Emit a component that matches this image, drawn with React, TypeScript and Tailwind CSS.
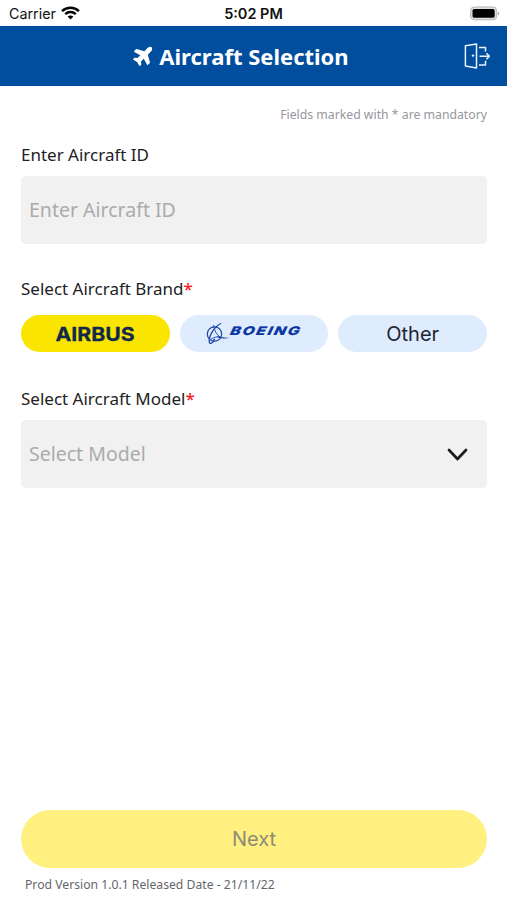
import React from "react";
import { FaPlane } from "react-icons/fa";

const noto = "font-['Noto_Sans',sans-serif]";
const inter = "font-['Inter',sans-serif]";

function StatusBar() {
  return (
    <div className={`grid h-[26px] grid-cols-3 items-center bg-white pl-[9px] pr-[7px] pt-[2px] text-[#111] ${inter}`}>
      <div className="flex items-center gap-[5px] text-[14.3px] leading-none">
        <span>Carrier</span>
        <svg className="-mt-[2px]" width="19" height="14" viewBox="0 0 19 14" fill="none" stroke="#050505" strokeWidth="2.5">
          <path d="M1.1 5.2C5.8.7 13.2.7 17.9 5.2" />
          <path d="M4.2 8.2c3-2.8 7.6-2.8 10.6 0" />
          <path d="M9.5 13.5 6.6 10.6c1.6-1.5 4.2-1.5 5.8 0z" fill="#050505" stroke="none" />
        </svg>
      </div>
      <span className="-ml-[2px] text-center text-[14.5px] font-semibold leading-none">5:02 PM</span>
      <svg className="-mt-[2px] justify-self-end" width="30" height="15" viewBox="0 0 30 15">
        <rect x=".6" y="1" width="26" height="12.8" rx="3.6" fill="#e0e0e0" stroke="#b5b5b5" />
        <rect x="2.5" y="3" width="22.2" height="8.8" rx="1.7" fill="#000" />
        <path d="M27.8 5.2c2 .8 2 3.6 0 4.4z" fill="#aaa" />
      </svg>
    </div>
  );
}

function Header() {
  return (
    <header className="grid h-[60px] grid-cols-[1fr_auto_1fr] items-center bg-[#004e9d] px-4 text-white">
      <span />
      <div className="-ml-[25px] flex items-center gap-[4px]">
        <FaPlane className="mb-[2px] -rotate-45" size={22} />
        <h1 className={`text-[22px] font-bold leading-none ${noto}`}>Aircraft Selection</h1>
      </div>
      <svg className="justify-self-end" width="27" height="26" viewBox="0 0 27 26" fill="none" stroke="#e6f4ff" strokeWidth="1.5" strokeLinejoin="round">
        <path d="M1.4 2.8 12.5.9v24L1.4 23z" />
        <path d="M15 4.4h6.5v4.2M15 21.9h6.5v-4.2M15.5 13.2h9.7M22.4 10.2l3 3-3 3" />
        <circle cx="9" cy="12.6" r="1.2" fill="#e6f4ff" stroke="none" />
      </svg>
    </header>
  );
}

function Label({ text, required = false }: { text: string; required?: boolean }) {
  return (
    <div className={`h-6 text-[17px] leading-6 text-[#222] ${noto}`}>
      {text}
      {required && <span className="font-medium text-[#fa1c24]">*</span>}
    </div>
  );
}

function AirbusLogo() {
  return (
    <svg className="overflow-visible" width="80" height="26" viewBox="0 0 80 26" role="img" aria-label="Airbus">
      <text x="0.5" y="19.5" textLength="79" lengthAdjust="spacingAndGlyphs" className="fill-[#12284c] font-['Inter',sans-serif] text-[19px] font-bold" stroke="#12284c" strokeWidth=".3">AIRBUS</text>
    </svg>
  );
}

function BoeingLogo() {
  return (
    <svg className="overflow-visible" width="96" height="24" viewBox="0 0 96 24" role="img" aria-label="Boeing">
      <g fill="none" stroke="#1d47a5">
        <circle cx="8.5" cy="12" r="7.2" strokeWidth="1.2" />
        <path d="M15 1.5C9 4 3.2 13 3.2 19c0 4.5 4 2.3 5.4-2.2" strokeWidth="1.3" />
        <path d="M7.5 3c.8 5.3 3 10 7.4 12.7" strokeWidth=".9" />
        <path d="M4.5 17.5c3.5-2.3 7-3.2 10-2.9" strokeWidth=".9" />
      </g>
      <path d="M11.5 14.7c4 .2 7.5 1.1 12.5 1.1-4.5 1.1-9 .6-12.5-.4z" fill="#1d47a5" />
      <text x="0" y="0" transform="translate(23.5 13.3) skewX(-14) scale(1.32 1)" textLength="52.5" lengthAdjust="spacing" className="fill-[#0b35a0] font-['Inter',sans-serif] text-[11.8px] font-extrabold italic" stroke="#0b35a0" strokeWidth=".2">BOEING</text>
    </svg>
  );
}

export default function App() {
  return (
    <div className="flex h-[900px] w-[507px] flex-col overflow-hidden bg-white">
      <StatusBar />
      <Header />
      <main className="flex flex-1 flex-col px-5 pl-[21px]">
        <p className={`mt-[19px] h-5 text-right text-[12.25px] leading-5 text-[#97979c] ${noto}`}>Fields marked with * are mandatory</p>
        <div className="mt-[18px]"><Label text="Enter Aircraft ID" /></div>
        <input className={`mt-[9px] h-[68px] rounded-[5px] bg-[#f1f1f1] px-2 pb-[2px] text-[19.5px] outline-none placeholder:text-[#ababab] ${noto}`} placeholder="Enter Aircraft ID" />
        <div className="mt-[33px]"><Label text="Select Aircraft Brand" required /></div>
        <div className="mt-[14px] grid h-[37px] grid-cols-3 gap-[10px]">
          <button className="flex items-center justify-center rounded-full bg-[#fae500]"><AirbusLogo /></button>
          <button className="flex items-center justify-center rounded-full bg-[#deecfe]"><BoeingLogo /></button>
          <button className={`rounded-full bg-[#deecfe] text-[20px] leading-none text-[#1d2630] ${inter}`}>Other</button>
        </div>
        <div className="mt-[35px]"><Label text="Select Aircraft Model" required /></div>
        <button className={`mt-[9px] flex h-[68px] items-center justify-between rounded-[5px] bg-[#f1f1f1] pl-2 pr-[19px] text-[19.5px] text-[#ababab] ${noto}`}>
          <span>Select Model</span>
          <svg className="mt-px" width="21" height="14" viewBox="0 0 21 14" fill="none" stroke="#1d1d1f" strokeWidth="2.7" strokeLinecap="round" strokeLinejoin="round"><path d="m2 2 8.5 9L19 2" /></svg>
        </button>
        <button className={`mt-auto h-[58px] shrink-0 rounded-full bg-[#fff080] text-[20px] text-[#8b8b79] ${inter}`}>Next</button>
        <footer className={`mb-[5px] mt-[7px] h-5 pl-[4px] text-[12.2px] leading-5 text-[#66666a] ${noto}`}>Prod Version 1.0.1 Released Date - 21/11/22</footer>
      </main>
    </div>
  );
}
